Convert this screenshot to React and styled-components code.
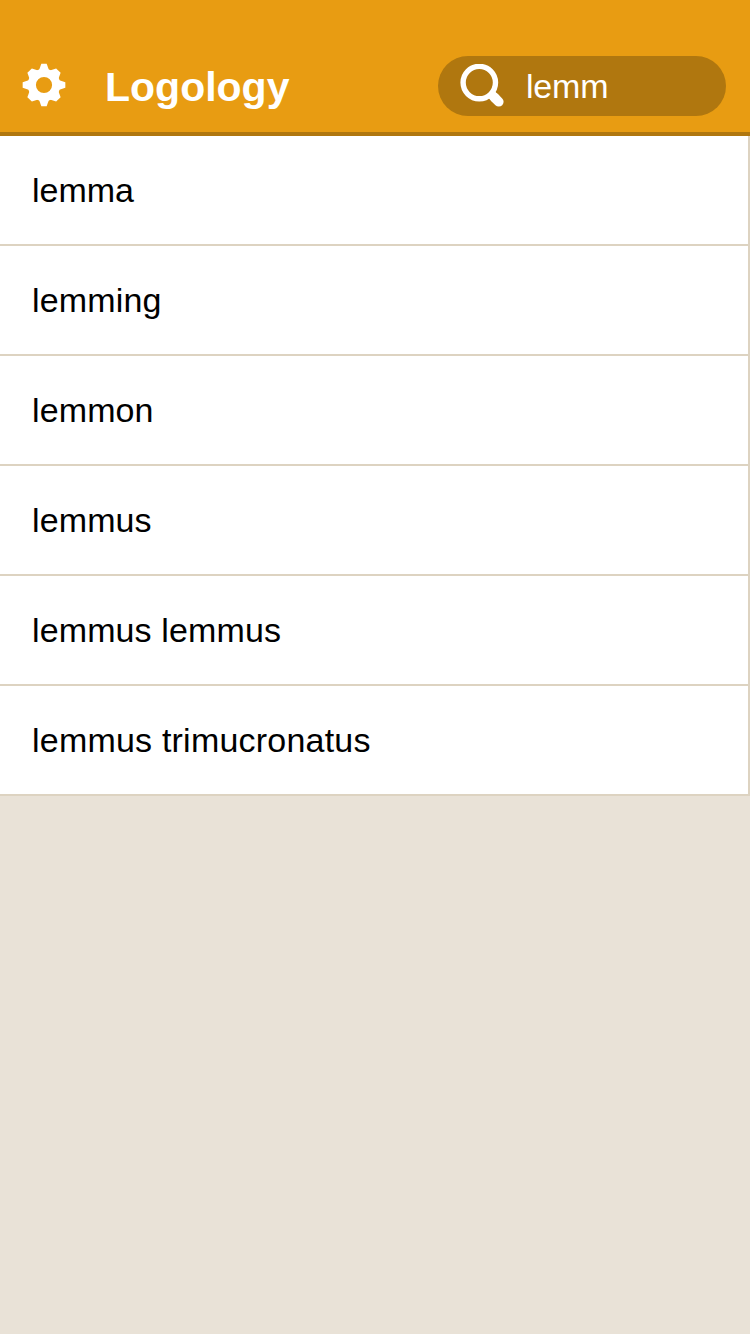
import React from "react";
import styled, { createGlobalStyle } from "styled-components";

const GlobalStyle = createGlobalStyle`
  * { box-sizing: border-box; }
  body {
    margin: 0;
    background: #e9e2d7;
    font-family: "Liberation Sans", Arial, Helvetica, sans-serif;
  }
`;

const Screen = styled.main`
  min-height: 100vh;
  background: #e9e2d7;
`;

const Header = styled.header`
  display: flex;
  align-items: center;
  height: 136px;
  padding: 40px 24px 0 22px;
  background: #e89c12;
  border-bottom: 4px solid #b0770f;
`;

const IconButton = styled.button`
  display: flex;
  padding: 0 0 2px;
  border: 0;
  background: none;
  color: #fff;
`;

const Title = styled.h1`
  flex: 1;
  margin: 2px 0 0 39px;
  font-size: 41px;
  line-height: 48px;
  font-weight: 700;
  color: #fff;
`;

const SearchBox = styled.label`
  display: flex;
  align-items: center;
  width: 288px;
  height: 60px;
  padding-left: 22px;
  border-radius: 30px;
  background: #b0770f;
`;

const SearchInput = styled.input`
  width: 170px;
  height: 40px;
  margin: 1px 0 0 22px;
  padding: 0;
  border: 0;
  outline: 0;
  background: none;
  color: #fff;
  font: 34px "Liberation Sans", Arial, sans-serif;
  letter-spacing: -0.2px;
`;

const List = styled.ul`
  margin: 0;
  padding: 0;
  list-style: none;
  border-right: 2px solid #ddd3c1;
  background: #fff;
`;

const Row = styled.li`
  display: flex;
  align-items: center;
  height: 110px;
  padding: 0 32px;
  border-bottom: 2px solid #ddd3c1;
  font-size: 34px;
  line-height: 40px;
  color: #000;
  letter-spacing: ${(p) => p.$tracking}px;
`;

const words = [
  { text: "lemma", tracking: 0 },
  { text: "lemming", tracking: 0.15 },
  { text: "lemmon", tracking: 0.12 },
  { text: "lemmus", tracking: 0.12 },
  { text: "lemmus lemmus", tracking: 0.12 },
  { text: "lemmus trimucronatus", tracking: 0.21 },
];

const GearIcon = () => (
  <svg width="44" height="44" viewBox="-66 -66 132 132" aria-hidden="true">
    <g fill="currentColor">
      {[0, 90, 180, 270].map((a) => (
        <g key={a} transform={`rotate(${a})`}>
          <path d="M-15-44L-8-64H8L15-44Z" />
          <path transform="rotate(45)" d="M-18-43L-9.5-61H9.5L18-43Z" />
        </g>
      ))}
    </g>
    <circle r="36.5" fill="none" stroke="currentColor" strokeWidth="24.5" />
  </svg>
);

const SearchIcon = () => (
  <svg width="44" height="44" viewBox="0 0 44 44" fill="none" stroke="#fff" aria-hidden="true">
    <circle cx="19.3" cy="18.6" r="16.2" strokeWidth="5.4" />
    <path d="M30.8 29.8L36 35" strokeWidth="9.4" />
    <path d="M34.5 33.5L38.8 37.8" strokeWidth="9.6" strokeLinecap="round" />
  </svg>
);

export default function App() {
  return (
    <Screen>
      <GlobalStyle />
      <Header>
        <IconButton aria-label="Settings">
          <GearIcon />
        </IconButton>
        <Title>Logology</Title>
        <SearchBox>
          <SearchIcon />
          <SearchInput aria-label="Search" defaultValue="lemm" />
        </SearchBox>
      </Header>
      <List>
        {words.map(({ text, tracking }) => (
          <Row key={text} $tracking={tracking}>
            {text}
          </Row>
        ))}
      </List>
    </Screen>
  );
}
